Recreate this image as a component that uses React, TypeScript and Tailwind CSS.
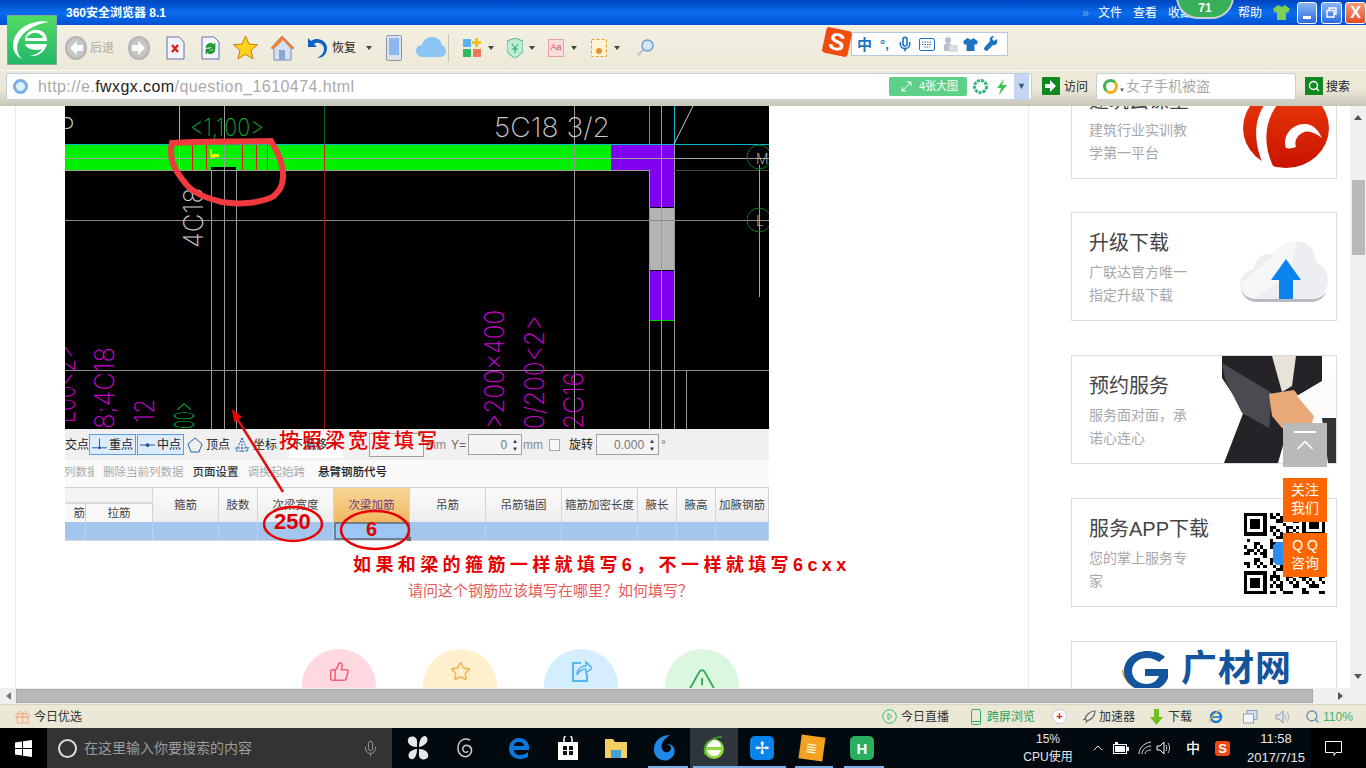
import { ThumbsUp, Star, TriangleAlert, Mic, Search, ChevronUp } from "lucide-react";

const SANS = "font-['Liberation_Sans','Noto_Sans_CJK_SC',sans-serif]";

const HEAD_COLS = [
  { label: "箍筋", w: "w-[66px]" },
  { label: "肢数", w: "w-[39px]" },
  { label: "次梁宽度", w: "w-[76px]" },
  { label: "次梁加筋", w: "w-[76px]", active: true },
  { label: "吊筋", w: "w-[76px]" },
  { label: "吊筋锚固", w: "w-[76px]" },
  { label: "箍筋加密长度", w: "w-[76px]" },
  { label: "腋长", w: "w-[39px]" },
  { label: "腋高", w: "w-[39px]" },
  { label: "加腋钢筋", w: "w-[53px]" },
];

function CadDrawing() {
  const greys = [
    [211, 170, 429], [224, 106, 429], [236, 170, 429], [574, 106, 429], [649, 170, 429], [661, 106, 429], [674, 106, 429], [686, 370, 429],
  ];
  return (
    <svg viewBox="65 106 704 323" className="block h-[323px] w-[704px] bg-black">
      <rect x="65" y="145" width="546" height="25" fill="#00f000" />
      <rect x="211" y="167" width="25" height="3" fill="#000" />
      <rect x="611" y="145" width="63" height="25" fill="#8000f0" />
      <rect x="649" y="145" width="25" height="62" fill="#8000f0" />
      <rect x="649" y="208" width="25" height="62" fill="#b4b4b4" />
      <rect x="649" y="271" width="25" height="49" fill="#8000f0" />
      <line x1="649" y1="320.5" x2="674" y2="320.5" stroke="#00d000" />
      {greys.map(([x, a, b]) => (
        <line key={x} x1={x + 0.5} y1={a} x2={x + 0.5} y2={b} stroke="#9a9a9a" />
      ))}
      <line x1="65" y1="144.5" x2="769" y2="144.5" stroke="#10b8c8" />
      <line x1="649.5" y1="106" x2="649.5" y2="145" stroke="#10b8c8" />
      <line x1="674.5" y1="106" x2="674.5" y2="145" stroke="#10b8c8" />
      <line x1="65" y1="158.5" x2="769" y2="158.5" stroke="#a0a0a0" />
      <line x1="65" y1="170.5" x2="649" y2="170.5" stroke="#a0a0a0" />
      <line x1="674" y1="170.5" x2="769" y2="170.5" stroke="#444" />
      <line x1="65" y1="220.5" x2="769" y2="220.5" stroke="#8a8a8a" />
      <line x1="65" y1="370.5" x2="769" y2="370.5" stroke="#8a8a8a" />
      <line x1="674" y1="144" x2="693" y2="106" stroke="#c8c8c8" />
      <line x1="324.5" y1="170" x2="324.5" y2="429" stroke="#a01010" />
      <line x1="324.5" y1="145" x2="324.5" y2="170" stroke="#d02020" />
      <line x1="324.5" y1="106" x2="324.5" y2="145" stroke="#0a6a20" />
      <line x1="179.5" y1="106" x2="179.5" y2="170" stroke="#c8c800" />
      <line x1="759.5" y1="165" x2="759.5" y2="297" stroke="#b8b800" />
      {[192, 206, 242, 256, 267].map((x) => (
        <line key={x} x1={x + 0.5} y1="145" x2={x + 0.5} y2="170" stroke="#e01818" />
      ))}
      <path d="M211 149v8h4" fill="none" stroke="#f0f000" strokeWidth="1.5" />
      <rect x="212" y="154" width="7" height="3" fill="#f0f000" />
      <circle cx="759" cy="157" r="12" fill="none" stroke="#0a7a20" />
      <circle cx="759" cy="220" r="12" fill="none" stroke="#0a7a20" />
      <g fontFamily="Inter, Liberation Sans, sans-serif" fontWeight="200">
        <text x="756" y="164" fill="#d8d8d8" fontSize="14">M</text>
        <text x="756" y="226" fill="#d8d8d8" fontSize="14">L</text>
        <text x="190" y="136" fill="#10b030" fontSize="24" textLength="74" lengthAdjust="spacingAndGlyphs">{"<1,100>"}</text>
        <text x="494" y="137" fill="#c8c8c8" fontSize="27" textLength="116" lengthAdjust="spacingAndGlyphs">5C18 3/2</text>
        <text x="58" y="137" fill="#c8c8c8" fontSize="27">P</text>
        <text transform="translate(203 248) rotate(-90)" fill="#c8c8c8" fontSize="27" textLength="60" lengthAdjust="spacingAndGlyphs">4C18</text>
        <g fill="#d000d0" fontSize="27">
          <text transform="translate(504 429) rotate(-90)" textLength="119" lengthAdjust="spacingAndGlyphs">{">200×400"}</text>
          <text transform="translate(544 429) rotate(-90)" textLength="114" lengthAdjust="spacingAndGlyphs">{"0/200<2>"}</text>
          <text transform="translate(583 429) rotate(-90)" textLength="57" lengthAdjust="spacingAndGlyphs">2C16</text>
          <text transform="translate(75 423) rotate(-90)" textLength="78" lengthAdjust="spacingAndGlyphs">{"L00<2>"}</text>
          <text transform="translate(114 429) rotate(-90)" textLength="82" lengthAdjust="spacingAndGlyphs">8;4C18</text>
          <text transform="translate(154 423) rotate(-90)" textLength="24" lengthAdjust="spacingAndGlyphs">12</text>
        </g>
        <text transform="translate(194 429) rotate(-90)" fill="#10c030" fontSize="27" textLength="27" lengthAdjust="spacingAndGlyphs">{"00>"}</text>
      </g>
    </svg>
  );
}

function CadToolbar() {
  return (
    <div className="flex h-[31px] items-center whitespace-nowrap bg-[#f0f0f0] text-[12px] text-[#222]">
      <span className="w-[24px]">交点</span>
      <div className="flex h-[21px] w-[47px] items-center gap-[2px] border border-[#5aa0e8] bg-[#dcecfb] pl-[2px]">
        <svg width="15" height="14" viewBox="0 0 16 14"><path d="M0 10h16M8 0v10" stroke="#2050a0" fill="none" /><circle cx="8" cy="10" r="1.5" fill="#2050a0" /></svg>
        <span>重点</span>
      </div>
      <div className="ml-[1px] flex h-[21px] w-[47px] items-center gap-[2px] border border-[#5aa0e8] bg-[#dcecfb] pl-[2px]">
        <svg width="15" height="14" viewBox="0 0 16 14"><path d="M0 7h16" stroke="#2050a0" /><circle cx="8" cy="7" r="2" fill="#2050a0" /></svg>
        <span>中点</span>
      </div>
      <svg className="ml-[3px]" width="16" height="16" viewBox="0 0 16 16"><path d="M8 1l7 6-3 8H4L1 7z" fill="none" stroke="#2060b0" /></svg>
      <span className="ml-[3px] w-[26px]">顶点</span>
      <svg className="ml-[2px]" width="16" height="16" viewBox="0 0 16 16"><path d="M8 1l6 13H2zM8 1v14M1 11h14" fill="none" stroke="#2060b0" strokeDasharray="2 1" /></svg>
      <span className="ml-[3px] w-[26px]">坐标</span>
      <div className="ml-[10px] h-[26px] w-[54px] bg-white pl-[2px] leading-[26px]">不偏移</div>
      <div className="ml-[26px] h-[24px] w-[55px] border border-[#a0a0a0] bg-[#f4f4f4]" />
      <span className="ml-[2px] text-[#888]">mm</span>
      <span className="ml-[5px] text-[#666]">Y=</span>
      <div className="ml-[2px] flex h-[21px] w-[54px] items-center justify-end border border-[#a0a0a0] bg-[#f4f4f4] pr-[3px] text-[#777]">
        <span className="mr-[5px]">0</span>
        <span className="flex flex-col text-[6px] leading-[8px] text-[#333]"><span>▲</span><span>▼</span></span>
      </div>
      <span className="ml-[1px] text-[#888]">mm</span>
      <span className="ml-[6px] h-[12px] w-[11px] border border-[#aaa] bg-[#f8f8f8]" />
      <span className="ml-[9px]">旋转</span>
      <div className="ml-[3px] flex h-[21px] w-[63px] items-center justify-end border border-[#a0a0a0] bg-[#f4f4f4] pr-[3px] text-[#777]">
        <span className="mr-[5px]">0.000</span>
        <span className="flex flex-col text-[6px] leading-[8px] text-[#333]"><span>▲</span><span>▼</span></span>
      </div>
      <span className="ml-[2px] text-[#666]">°</span>
    </div>
  );
}

function CadTable() {
  return (
    <div className="text-[11.5px] text-[#444]">
      <div className="flex h-[27px] items-start gap-[9px] whitespace-nowrap bg-[#fafafa] pt-[4px] text-[#aaa]">
        <span className="ml-[-1px] w-[30px] overflow-hidden">列数据</span>
        <span>删除当前列数据</span>
        <span className="font-medium text-[#333]">页面设置</span>
        <span>调换起始跨</span>
        <span className="ml-[4px] font-medium text-[#222]">悬臂钢筋代号</span>
      </div>
      <div className="flex h-[35px] border-t border-[#d0d0d0]">
        <div className="flex w-[88px] flex-col">
          <div className="h-[17px] border-b-2 border-r border-[#d8d8d8] bg-[#f3f3f3]" />
          <div className="flex flex-1 bg-[#f8f8f8]">
            <span className="w-[21px] overflow-hidden border-r border-[#d0d0d0] text-right leading-[18px]">筋</span>
            <span className="flex-1 border-r border-[#d0d0d0] text-center leading-[18px]">拉筋</span>
          </div>
        </div>
        {HEAD_COLS.map((c) => (
          <div
            key={c.label}
            className={`${c.w} flex justify-center overflow-hidden whitespace-nowrap border-r border-[#d4d4d4] pt-[9px] ${c.active ? "bg-linear-to-b from-[#f8d694] to-[#f0b860] text-[#6a3a80]" : "bg-linear-to-b from-[#fbfbfb] to-[#ededed]"}`}
          >
            {c.label}
          </div>
        ))}
      </div>
      <div className="flex h-[19px] border-b border-[#d8d8d8] bg-[#a3c6ee]">
        <div className="w-[21px] border-r border-[#bcd4f0]" />
        <div className="w-[67px] border-r border-[#bcd4f0]" />
        {HEAD_COLS.map((c) => (
          <div key={c.label} className={`${c.w} ${c.active ? "relative border-2 border-[#6e7e8e] bg-[#9cc6f4]" : "border-r border-[#bcd4f0]"}`}>
            {c.active && <span className="absolute bottom-[-3px] right-[-3px] h-[4px] w-[4px] bg-[#666]" />}
          </div>
        ))}
      </div>
    </div>
  );
}

function Annotations() {
  return (
    <>
      <svg viewBox="65 106 704 445" className="pointer-events-none absolute left-0 top-0 h-[445px] w-[704px]">
        <path
          d="M172 143C200 141 240 142 271 141C278 152 284 165 283 178C282 190 277 192 274 196C262 203 240 205 222 202C205 198 193 193 186 184C176 172 168 160 172 143Z"
          fill="none"
          stroke="#f03a3f"
          strokeWidth="6"
        />
        <line x1="283" y1="492" x2="236" y2="417" stroke="#e01010" strokeWidth="2.5" />
        <path d="M232 409l10 8-8 5z" fill="#f00000" />
        <ellipse cx="293" cy="524" rx="29" ry="17" fill="none" stroke="#e80000" strokeWidth="2.5" />
        <ellipse cx="375" cy="530" rx="34" ry="19" fill="none" stroke="#e80000" strokeWidth="2.5" />
      </svg>
      <span className="absolute left-[214px] top-[322px] whitespace-nowrap text-[20px] font-medium leading-[26px] tracking-[3px] text-[#e80000]">按照梁宽度填写</span>
      <span className="absolute left-[209px] top-[404px] text-[22px] font-bold leading-[24px] text-[#e00000]">250</span>
      <span className="absolute left-[301px] top-[412px] text-[20px] font-bold leading-[22px] text-[#e00000]">6</span>
    </>
  );
}

function Flame() {
  return (
    <svg width="88" height="72" viewBox="0 0 88 72">
      <defs>
        <linearGradient id="fl" x1="0" y1="0" x2="0" y2="1"><stop offset="0" stopColor="#ec3a08" /><stop offset="1" stopColor="#c81400" /></linearGradient>
      </defs>
      <ellipse cx="44" cy="32" rx="43" ry="40" fill="url(#fl)" />
      <path d="M30 0C14 14 8 40 22 70c5 2 8 2 10 2C18 44 24 16 44 0z" fill="#fff" />
      <path d="M44 52C40 40 50 27 64 28c8 1 12 6 16 14-8-6-14-8-20-5-5 3-8 8-6 14-3 1-7 2-10 1z" fill="#fff" />
    </svg>
  );
}

function CloudUp() {
  return (
    <svg width="88" height="62" viewBox="0 0 88 62">
      <path d="M16 58C6 58 0 50 0 43c0-9 8-14 14-15 0-12 12-18 20-14C38 6 46 0 56 0c12 0 20 10 20 21 6 2 12 9 12 19 0 10-8 18-16 18z" fill="#eceef2" />
      <path d="M34 14C38 6 46 0 56 0L52 30 14 58C6 56 2 50 0 43z" fill="#f6f7f9" />
      <path d="M16 58h56c6 0 12-3 15-9-2 7-8 12-15 12H16C9 61 3 56 1 49c3 6 9 9 15 9z" fill="#b8bcc2" />
      <path d="M46 18L61 39H53V58H39V39H31z" fill="#0a84ec" strokeLinejoin="round" />
    </svg>
  );
}

function Handshake() {
  return (
    <svg width="114" height="107" viewBox="0 0 114 107" className="block">
      <path d="M0 0H100V25L75 40 56 107H2L22 55 0 22z" fill="#232328" />
      <path d="M50 0H74L70 30 60 36z" fill="#e8e2d8" />
      <path d="M0 7L50 37 47 72 20 57 3 23z" fill="#4a4a50" />
      <path d="M47 38L72 34 92 60 88 74 60 72 50 60z" fill="#e8a878" />
      <path d="M75 40L114 17V62L92 60z" fill="#fbfbfb" />
      <path d="M100 62L114 62V107H106z" fill="#333338" />
    </svg>
  );
}

function QrCode() {
  const n = 25;
  const cells: [number, number][] = [];
  for (let y = 0; y < n; y++) {
    for (let x = 0; x < n; x++) {
      const inFinder = (x < 8 && y < 8) || (x >= n - 8 && y < 8) || (x < 8 && y >= n - 8);
      if (!inFinder && ((x * 7 + y * 13 + x * y) % 5 < 2 || (x * y) % 7 === 1)) cells.push([x, y]);
    }
  }
  const finder = (x: number, y: number) => (
    <g key={`${x}-${y}`}>
      <rect x={x} y={y} width="7" height="7" fill="#000" />
      <rect x={x + 1} y={y + 1} width="5" height="5" fill="#fff" />
      <rect x={x + 2} y={y + 2} width="3" height="3" fill="#000" />
    </g>
  );
  return (
    <svg width="81" height="81" viewBox="0 0 25 25" shapeRendering="crispEdges" className="block">
      {cells.map(([x, y]) => (
        <rect key={`${x}:${y}`} x={x} y={y} width="1" height="1" fill="#000" />
      ))}
      {finder(0, 0)}
      {finder(18, 0)}
      {finder(0, 18)}
      <rect x="9" y="9" width="7" height="7" rx="1.5" fill="#2b8ef0" />
    </svg>
  );
}

function SideCard({ title, lines, mt, art, artClass }: { title: string; lines: string[]; mt: string; art: React.ReactNode; artClass: string }) {
  return (
    <div className={`${mt} flex h-[109px] w-[266px] shrink-0 justify-between overflow-hidden border border-[#dcdcdc] bg-white`}>
      <div className="w-[126px] shrink-0 pl-[17px] pt-[16px]">
        <div className="whitespace-nowrap text-[20px] leading-[28px] text-[#444]">{title}</div>
        <div className="mt-[4px] text-[14px] leading-[23px] text-[#a8a8a8]">
          {lines.map((l) => (
            <div key={l} className="whitespace-nowrap">{l}</div>
          ))}
        </div>
      </div>
      <div className={artClass}>{art}</div>
    </div>
  );
}

function Sidebar() {
  return (
    <div className="ml-[42px] flex h-full w-[266px] flex-col overflow-hidden">
      <SideCard
        mt="mt-[-36px]"
        title="建筑云课堂"
        lines={["建筑行业实训教", "学第一平台"]}
        art={<Flame />}
        artClass="mr-[6px] mt-[25px]"
      />
      <SideCard
        mt="mt-[33px]"
        title="升级下载"
        lines={["广联达官方唯一", "指定升级下载"]}
        art={<CloudUp />}
        artClass="mr-[8px] mt-[28px]"
      />
      <SideCard
        mt="mt-[34px]"
        title="预约服务"
        lines={["服务面对面，承", "诺心连心"]}
        art={<Handshake />}
        artClass="mt-[0px]"
      />
      <SideCard
        mt="mt-[34px]"
        title="服务APP下载"
        lines={["您的掌上服务专", "家"]}
        art={<QrCode />}
        artClass="mr-[11px] mt-[14px]"
      />
      <div className="mt-[34px] flex h-[60px] w-[266px] shrink-0 items-start gap-[8px] border border-[#dcdcdc] bg-white pl-[49px] pt-[7px]">
        <svg width="52" height="46" viewBox="0 0 52 46">
          <path d="M2 20C4 30 10 38 22 42 12 40 2 32 1 22z" fill="#ec9a20" />
          <path d="M44 8C40 4 33 2 26 2 13 2 3 11 3 22s10 20 23 20c10 0 18-5 21-13V20H24v7h14c-2 5-7 8-12 8-9 0-15-6-15-13S17 9 26 9c5 0 9 2 12 4z" fill="#14549c" />
        </svg>
        <span className="text-[36px] font-bold leading-[40px] tracking-[1px] text-[#14549c]">广材网</span>
      </div>
    </div>
  );
}

function ActionCircle({ bg, pad, children }: { bg: string; pad: string; children: React.ReactNode }) {
  return (
    <div className={`flex h-[74px] w-[74px] justify-center rounded-full ${pad} ${bg}`}>{children}</div>
  );
}

function TitleBar() {
  return (
    <div className="flex h-[25px] items-center whitespace-nowrap bg-linear-to-b from-[#0044c0] via-[#0a6cec] to-[#0052d4] text-[12px] text-white">
      <span className="ml-[66px] font-bold">360安全浏览器 8.1</span>
      <span className="ml-auto text-[#7aa8e8]">»</span>
      <div className="ml-[9px] flex gap-[11px]">
        <span>文件</span>
        <span>查看</span>
        <span className="w-[50px]">收藏 工具</span>
      </div>
      <span className="ml-[20px]">帮助</span>
      <svg className="ml-[11px]" width="17" height="15" viewBox="0 0 17 15"><path d="M5 0L0 4l2 4 2-1v8h9V7l2 1 2-4-5-4-3 2z" fill="#7fd050" /></svg>
      <div className="ml-[7px] flex h-[22px] w-[20px] items-end justify-center rounded-[3px] border border-white bg-linear-to-b from-[#8ab4f0] to-[#2a6ae0] pb-[4px]">
        <span className="h-[3px] w-[8px] bg-white" />
      </div>
      <div className="ml-[4px] flex h-[22px] w-[21px] items-center justify-center rounded-[3px] border border-white bg-linear-to-b from-[#8ab4f0] to-[#2a6ae0]">
        <svg width="11" height="11" viewBox="0 0 11 11"><path d="M3 3V1h7v6H8M1 3.500h7v6.500H1z" fill="none" stroke="#fff" strokeWidth="1.4" /></svg>
      </div>
      <div className="ml-[3px] flex h-[22px] w-[21px] items-center justify-center rounded-[3px] border border-white bg-linear-to-b from-[#f4a080] to-[#e04818] text-[16px] font-bold leading-none">X</div>
    </div>
  );
}

function Caret() {
  return <span className="h-0 w-0 border-x-[3px] border-t-[4px] border-x-transparent border-t-[#444]" />;
}

function NavArrow({ flip }: { flip?: boolean }) {
  return (
    <svg width="22" height="24" viewBox="0 0 22 24" className={flip ? "-scale-x-100" : ""}>
      <ellipse cx="11" cy="12" rx="11" ry="12" fill="#b4b4b4" />
      <ellipse cx="11" cy="12" rx="9" ry="10" fill="#c6c6c6" />
      <path d="M12 5l-7 7 7 7v-4h6V9h-6z" fill="#fff" />
    </svg>
  );
}

function MainToolbar() {
  return (
    <div className="flex h-[45px] items-center whitespace-nowrap bg-linear-to-b from-[#f3f0e2] to-[#ece9d9] pl-[65px] text-[12px] text-[#333]">
      <NavArrow />
      <span className="ml-[3px] text-[#aaa]">后退</span>
      <span className="ml-[14px] flex"><NavArrow flip /></span>
      <svg className="ml-[16px]" width="19" height="24" viewBox="0 0 19 24"><path d="M1 1h12l5 5v17H1z" fill="#f4f6ff" stroke="#6070b0" /><path d="M6 9l6 7M12 9l-6 7" stroke="#e02010" strokeWidth="2.4" /></svg>
      <svg className="ml-[16px]" width="19" height="24" viewBox="0 0 19 24"><path d="M1 1h12l5 5v17H1z" fill="#f4f6ff" stroke="#6070b0" /><path d="M5 12a4.500 4.500 0 018-3l1-2v6h-5l2-2M14 13a4.500 4.500 0 01-8 3l-1 2v-5h5l-2 2" fill="#20a030" stroke="#108020" strokeWidth=".6" /></svg>
      <svg className="ml-[13px]" width="25" height="25" viewBox="0 0 25 25"><path d="M12.500 1l3.500 8 8.500.8-6.500 5.600 2 8.400-7.500-4.500L5 23.800l2-8.400L.5 9.800 9 9z" fill="#ffd21e" stroke="#c08010" /></svg>
      <svg className="ml-[12px]" width="25" height="26" viewBox="0 0 25 26"><path d="M12 1L1 13l3 1v11h17V14l3-1z" fill="#cfe2f6" stroke="#7a8cb0" /><path d="M12 1L1 13l3 1L13 5l8 9 3-1z" fill="#f08030" /><rect x="9" y="15" width="6" height="10" fill="#90a8c8" /></svg>
      <svg className="ml-[11px]" width="22" height="24" viewBox="0 0 22 24"><path d="M2 2v9h9L8 8c4-3 10 0 10 5 0 4-3 7-7 9 6 0 10-4 10-10C21 5 12 0 5 5z" fill="#1060c8" /></svg>
      <span className="ml-[4px] text-[#222]">恢复</span>
      <span className="ml-[10px] flex"><Caret /></span>
      <svg className="ml-[14px]" width="16" height="26" viewBox="0 0 16 26"><rect x=".5" y=".5" width="15" height="25" rx="2" fill="#dde2ea" stroke="#8a94a4" /><rect x="3" y="3" width="10" height="17" fill="#8cb8ee" /></svg>
      <svg className="ml-[14px]" width="30" height="21" viewBox="0 0 30 21"><path d="M7 20C3 20 0 17 0 14c0-4 3-6 6-6 1-5 5-8 10-8 6 0 9 4 10 8 2 1 4 3 4 6 0 4-3 6-6 6z" fill="#8cc4f4" /></svg>
      <span className="ml-[2px] h-[28px] w-px bg-[#c8c4b0]" />
      <svg className="ml-[14px]" width="19" height="20" viewBox="0 0 19 20"><rect y="1" width="8" height="8" fill="#58b0f0" /><rect y="11" width="8" height="8" fill="#30b860" /><rect x="10" y="11" width="8" height="8" fill="#f07858" /><path d="M12 0h3v3h3v3h-3v3h-3V6H9V3h3z" fill="#f0c020" /></svg>
      <span className="ml-[6px] flex"><Caret /></span>
      <svg className="ml-[13px]" width="16" height="20" viewBox="0 0 16 20"><path d="M8 0l8 3v8c0 4-4 7-8 9-4-2-8-5-8-9V3z" fill="#bdeed4" stroke="#50b088" /><path d="M5 6l3 4 3-4M8 10v5M5 11h6" stroke="#20a070" fill="none" /></svg>
      <span className="ml-[6px] flex"><Caret /></span>
      <span className="ml-[13px] flex h-[18px] w-[16px] items-center justify-center border border-[#e8a0a0] bg-[#fbdcdc] text-[9px] leading-none text-[#d05050]">Aa</span>
      <span className="ml-[7px] flex"><Caret /></span>
      <svg className="ml-[14px]" width="16" height="18" viewBox="0 0 16 18"><rect x=".5" y=".5" width="15" height="17" fill="#fdf4d4" stroke="#e0a030" strokeDasharray="3 2" /><circle cx="8" cy="12" r="3" fill="#e89030" /></svg>
      <span className="ml-[7px] flex"><Caret /></span>
      <svg className="ml-[17px]" width="17" height="17" viewBox="0 0 17 17"><circle cx="10.500" cy="6.500" r="5.500" fill="#d4e6f6" stroke="#6a9ccc" strokeWidth="1.400" /><path d="M6.500 10.500L1 16" stroke="#b8c4d0" strokeWidth="2.400" /></svg>
    </div>
  );
}

function AddressBar() {
  return (
    <div className="flex h-[36px] items-start whitespace-nowrap border-t border-[#fbfaf4] bg-linear-to-b from-[#ece9d9] via-[#ece9d9] to-[#c8c6b8] pl-[6px] pt-[2px]">
      <div className="flex h-[27px] w-[1026px] items-center rounded-[3px] border border-[#c0cfe0] bg-white">
        <span className="ml-[6px] h-[15px] w-[15px] rounded-full border-[3px] border-[#7ab0e8] bg-[#dff0ff]" />
        <span className="ml-[10px] w-[851px] text-[16px] tracking-[0.42px] text-[#aaa]">
          http://e.<span className="text-[#222]">fwxgx.com</span>/question_1610474.html
        </span>
        <div className="flex h-[19px] w-[78px] items-center rounded-[2px] bg-[#5fd088] pl-[12px] text-[11px] text-white">
          <svg width="11" height="11" viewBox="0 0 11 11"><path d="M1 10l9-9M6 1h4v4M1 6v4h4" stroke="#fff" fill="none" /></svg>
          <span className="ml-[7px]">4张大图</span>
        </div>
        <svg className="ml-[6px]" width="15" height="15" viewBox="0 0 15 15"><circle cx="7.500" cy="7.500" r="6" fill="none" stroke="#30b878" strokeWidth="3" strokeDasharray="3 1" /></svg>
        <svg className="ml-[8px]" width="11" height="16" viewBox="0 0 11 16"><path d="M8 0L1 9h4l-2 7 8-10H6z" fill="#38c850" /></svg>
        <span className="ml-[7px] flex h-[25px] w-[15px] items-center justify-center bg-[#c4d6f4] text-[9px] text-[#405080]">▼</span>
      </div>
      <svg className="ml-[10px] mt-[4px]" width="18" height="18" viewBox="0 0 18 18"><rect width="18" height="18" rx="1" fill="#108820" /><path d="M8 3l6 6-6 6v-4H3V7h5z" fill="#fff" /></svg>
      <span className="ml-[4px] mt-[5px] text-[12px] text-[#222]">访问</span>
      <div className="ml-[8px] flex h-[27px] w-[200px] items-center rounded-[3px] border border-[#c0cfe0] bg-white">
        <span className="ml-[6px] h-[15px] w-[15px] rounded-full border-[3px] border-b-[#f0b020] border-l-[#40b050] border-r-[#f0b020] border-t-[#40b050]" />
        <span className="ml-[1px] mt-[8px] text-[6px] text-[#555]">▼</span>
        <span className="ml-[1px] text-[14px] text-[#aaa]">女子手机被盗</span>
      </div>
      <span className="ml-[9px] mt-[4px] flex h-[18px] w-[18px] items-center justify-center bg-[#108820]">
        <Search size={12} strokeWidth={3} className="text-white" />
      </span>
      <span className="ml-[3px] mt-[5px] text-[12px] text-[#222]">搜索</span>
    </div>
  );
}

function StatusBar() {
  return (
    <div className="flex h-[24px] items-center whitespace-nowrap border-t border-[#d8d4c0] bg-[#ebe8d7] text-[12px] text-[#333]">
      <svg className="ml-[15px]" width="15" height="15" viewBox="0 0 15 15"><path d="M1 5h13v3H1zM2 8h11v6H2zM7.500 5v9M7.500 5C5 1 2 2 4 5M7.500 5c2-4 5-3 3 0" fill="none" stroke="#f0a888" /></svg>
      <span className="ml-[4px]">今日优选</span>
      <svg className="ml-[800px]" width="15" height="15" viewBox="0 0 15 15"><circle cx="7.500" cy="7.500" r="6.800" fill="none" stroke="#30c070" /><path d="M6 4.500l4 3-4 3z" fill="none" stroke="#30c070" /></svg>
      <span className="ml-[4px]">今日直播</span>
      <svg className="ml-[22px]" width="10" height="16" viewBox="0 0 10 16"><rect x=".5" y=".5" width="9" height="15" rx="1" fill="none" stroke="#30b060" /><path d="M1 12.500h8" stroke="#30b060" /></svg>
      <span className="ml-[6px] text-[#30a050]">跨屏浏览</span>
      <span className="ml-[17px] flex h-[15px] w-[15px] items-center justify-center rounded-full border border-[#c0c8d8] bg-white text-[11px] font-bold leading-none text-[#d02030]">+</span>
      <svg className="ml-[15px]" width="14" height="14" viewBox="0 0 14 14"><path d="M13 1C8 1 4 5 3 9l2 2c4-1 8-5 8-10zM3 9l-2 1M5 11l-1 2" fill="none" stroke="#666" strokeWidth="1.200" /></svg>
      <span className="ml-[3px]">加速器</span>
      <svg className="ml-[15px]" width="13" height="16" viewBox="0 0 13 16"><path d="M4 0h5v8h4l-6.500 8L0 8h4z" fill="#70c020" /></svg>
      <span className="ml-[5px]">下载</span>
      <svg className="ml-[16px]" width="16" height="16" viewBox="0 0 16 16"><circle cx="8" cy="8" r="5" fill="none" stroke="#1878d8" strokeWidth="2.400" /><path d="M4 8h9" stroke="#1878d8" strokeWidth="1.600" /><path d="M2 14C0 10 8 2 14 1" fill="none" stroke="#f0b020" strokeWidth="1.200" /></svg>
      <svg className="ml-[19px]" width="15" height="14" viewBox="0 0 15 14"><rect x="4" y=".5" width="10" height="9" fill="#d4e0f0" stroke="#8aa0c0" /><rect x=".5" y="4" width="10" height="9" fill="#f2f6fb" stroke="#8aa0c0" /></svg>
      <svg className="ml-[17px]" width="15" height="14" viewBox="0 0 15 14"><path d="M1 5h3l4-4v12L4 9H1z" fill="#e0e4ea" stroke="#9098a8" /><path d="M10 4c1 2 1 4 0 6M12 2c2 3 2 7 0 10" fill="none" stroke="#a8b0c0" /></svg>
      <Search className="ml-[15px] text-[#5a88b8]" size={15} strokeWidth={2} />
      <span className="ml-[3px] text-[#40b070]">110%</span>
    </div>
  );
}

function Taskbar() {
  return (
    <div className="flex h-[40px] items-stretch bg-[#02090f] text-white">
      <div className="flex w-[47px] items-center justify-center bg-black">
        <svg width="17" height="17" viewBox="0 0 17 17"><path d="M0 2.500l7-1v6.500H0zM8 1.300L17 0v8H8zM0 9h7v6.500l-7-1zM8 9h9v8l-9-1.300z" fill="#fff" /></svg>
      </div>
      <div className="flex w-[345px] items-center bg-[#333333]">
        <span className="ml-[11px] h-[19px] w-[19px] rounded-full border-2 border-[#dcdcdc]" />
        <span className="ml-[7px] text-[14px] text-[#9c9c9c]">在这里输入你要搜索的内容</span>
        <Mic className="ml-auto mr-[13px] text-[#999]" size={17} strokeWidth={1.4} />
      </div>
      <div className="flex items-center">
        <svg className="ml-[15px]" width="22" height="24" viewBox="0 0 22 24"><path d="M10 11C3 11 0 7 1 3c2-4 9-3 9 2zM12 11c0-6 2-11 6-11 4 1 4 9-6 11zM10 13c0 6-2 11-6 10-4-1-4-9 6-10zM12 13c7 0 10 4 9 8-2 4-9 3-9-2z" fill="#e8e8e8" /></svg>
        <svg className="ml-[27px]" width="18" height="22" viewBox="0 0 18 22"><path d="M14 3C8 0 2 4 2 11s6 10 10 8 5-8 1-10-7 1-6 4 4 3 5 1" fill="none" stroke="#cfcfcf" strokeWidth="1.500" /></svg>
        <svg className="ml-[34px]" width="22" height="24" viewBox="0 0 22 24"><path d="M11 2C4 2 1 8 1 13c0 6 5 10 11 10 3 0 6-1 8-2v-5c-2 2-5 3-8 3-3 0-6-2-6-5h15c1-7-3-12-10-12zM6 10c0-3 2-4 5-4s5 2 5 4z" fill="#0a78d8" /></svg>
        <svg className="ml-[27px]" width="22" height="24" viewBox="0 0 22 24"><path d="M1 6h20v18H1z" fill="#fff" /><path d="M7 6V3a4 4 0 018 0v3" fill="none" stroke="#fff" strokeWidth="1.500" /><path d="M6 10h4v4H6zM12 10h4v4h-4zM6 15h4v4H6zM12 15h4v4h-4z" fill="#111" /></svg>
        <svg className="ml-[26px]" width="22" height="20" viewBox="0 0 22 20"><path d="M0 1h8l2 3h12v16H0z" fill="#f4d060" /><path d="M6 12h10v8H6z" fill="#40a0d8" /></svg>
        <svg className="ml-[25px]" width="24" height="28" viewBox="0 0 24 28"><path d="M18 1C8 1 1 8 2 17c1 7 8 11 14 9 5-2 8-7 6-12-1-3-5-5-8-3 3-1 5 1 5 3 0 3-3 5-6 4s-4-5-3-8c1-4 5-7 8-9z" fill="#2088e8" /></svg>
        <div className="relative ml-[14px] flex h-full w-[48px] items-center justify-center bg-[#2e363c]">
          <svg width="24" height="26" viewBox="0 0 24 26"><circle cx="12" cy="14" r="10" fill="#90d840" /><path d="M5 12h14a7 7 0 00-14 0zM5 15h14c-1 4-4 6-7 6-4 0-6-3-7-6z" fill="#fff" /><path d="M3 20C0 10 10 2 20 2" fill="none" stroke="#40a030" strokeWidth="1.500" /></svg>
        </div>
        <span className="ml-[12px] flex h-[24px] w-[24px] items-center justify-center rounded-[5px] bg-[#0a84e8] text-[17px] leading-none text-white">✢</span>
        <span className="ml-[26px] flex h-[24px] w-[24px] rotate-[8deg] items-center justify-center bg-[#f4a020] text-[14px] leading-none text-[#fff4d0]">≣</span>
        <span className="ml-[26px] flex h-[24px] w-[24px] items-center justify-center rounded-[5px] bg-[#28b060] text-[15px] font-bold leading-none text-white">H</span>
      </div>
      <div className="ml-[144px] flex w-[60px] flex-col items-center justify-center text-[12px] leading-[18px] text-[#e8e8e8]">
        <span>15%</span>
        <span className="whitespace-nowrap">CPU使用</span>
      </div>
      <div className="flex items-center">
        <ChevronUp className="ml-[12px]" size={16} strokeWidth={1.4} />
        <svg className="ml-[7px]" width="16" height="12" viewBox="0 0 16 12"><rect x=".5" y="2.500" width="13" height="9" fill="none" stroke="#fff" /><rect x="2" y="4" width="10" height="6" fill="#fff" /><path d="M14 5h2v4h-2zM2 0h3v2H2z" fill="#fff" /></svg>
        <svg className="ml-[9px]" width="14" height="14" viewBox="0 0 14 14"><path d="M1 13C1 7 6 2 13 1M4 13c0-4 4-8 9-8M7 13c0-2 2-4 6-4" fill="none" stroke="#ddd" /></svg>
        <svg className="ml-[4px]" width="15" height="14" viewBox="0 0 15 14"><path d="M1 5h3l4-4v12L4 9H1z" fill="none" stroke="#fff" /><path d="M10 4c1 2 1 4 0 6M12 2c2 3 2 7 0 10" fill="none" stroke="#ccc" /></svg>
        <span className="ml-[15px] text-[14px] font-medium">中</span>
        <span className="ml-[15px] flex h-[15px] w-[15px] items-center justify-center rounded-[3px] bg-[#f04810] text-[13px] font-bold leading-none text-white">S</span>
      </div>
      <div className="ml-[15px] flex w-[62px] flex-col items-center justify-center whitespace-nowrap text-[13px] leading-[19px] text-[#e8e8e8]">
        <span>11:58</span>
        <span>2017/7/15</span>
      </div>
      <div className="ml-[4px] flex flex-1 items-center justify-center bg-black pr-[10px]">
        <svg width="17" height="17" viewBox="0 0 17 17"><path d="M.5 1.500h16v11H11l-2 3v-3H.5z" fill="none" stroke="#fff" /></svg>
      </div>
    </div>
  );
}

export default function App() {
  return (
    <div className={`relative flex h-[768px] w-[1366px] flex-col overflow-hidden bg-white ${SANS}`}>
      <TitleBar />
      <MainToolbar />
      <AddressBar />

      <div className="flex h-[582px] bg-white">
        <div className="flex w-[1350px]">
          <div className="ml-[15px] w-[1014px] shrink-0 overflow-hidden border-x border-[#e8e8e8] pl-[49px]">
            <div className="relative w-[704px]">
              <CadDrawing />
              <CadToolbar />
              <CadTable />
              <Annotations />
            </div>
            <div className="ml-[288px] mt-[13px] whitespace-nowrap text-[18px] font-bold leading-[22px] tracking-[4.4px] text-[#e80000]">如果和梁的箍筋一样就填写6，不一样就填写6cxx</div>
            <div className="ml-[343px] mt-[5px] whitespace-nowrap text-[15px] leading-[20px] text-[#e85a5a]">请问这个钢筋应该填写在哪里？如何填写？</div>
            <div className="ml-[237px] mt-[48px] flex gap-[47px]">
              <ActionCircle bg="bg-[#ffd9df]" pad="pt-[12px]"><ThumbsUp size={21} strokeWidth={1.8} className="text-[#f0607a]" /></ActionCircle>
              <ActionCircle bg="bg-[#ffefcc]" pad="pt-[12px]"><Star size={21} strokeWidth={1.8} className="text-[#f4b450]" /></ActionCircle>
              <ActionCircle bg="bg-[#d4eeff]" pad="pt-[11px]">
                <svg width="21" height="22" viewBox="0 0 21 22"><path d="M10 3H2v18h14v-7" fill="none" stroke="#58b4ee" strokeWidth="2" /><path d="M6 15c0-6 4-9 9-9V2l6 6-6 5V9c-4 0-7 2-9 6z" fill="none" stroke="#58b4ee" strokeWidth="1.600" /></svg>
              </ActionCircle>
              <ActionCircle bg="bg-[#dcf7e0]" pad="pt-[17px]"><TriangleAlert size={34} strokeWidth={1.3} className="text-[#30a858]" /></ActionCircle>
            </div>
          </div>
          <Sidebar />
        </div>
        <div className="flex w-[16px] flex-col items-center bg-[#f0f0f0] text-[#555]">
          <span className="mt-[9px] h-0 w-0 border-x-[4px] border-b-[5px] border-x-transparent border-b-[#555]" />
          <span className="mt-[60px] h-[75px] w-[13px] bg-[#b9b9b9]" />
          <span className="mt-auto mb-[9px] h-0 w-0 border-x-[4px] border-t-[5px] border-x-transparent border-t-[#555]" />
        </div>
      </div>

      <div className="flex h-[16px] items-center bg-[#f0f0f0]">
        <span className="ml-[6px] h-0 w-0 border-y-[4px] border-r-[5px] border-y-transparent border-r-[#777]" />
        <span className="ml-[5px] h-[14px] w-[1297px] border border-[#a8a8a8] bg-[#b9b9b9]" />
        <span className="ml-[25px] h-0 w-0 border-y-[4px] border-l-[5px] border-y-transparent border-l-[#555]" />
      </div>

      <StatusBar />
      <Taskbar />

      {/* 窗口上方覆盖的元素 */}
      <div className="absolute left-[7px] top-[15px] flex h-[50px] w-[50px] items-center justify-center border border-[#80a8a0] bg-linear-to-b from-[#50dc60] to-[#20b868]">
        <svg width="42" height="42" viewBox="0 0 42 42">
          <path d="M38 3C26 0 8 6 3 20c-3 9 1 17 8 20-4-4-6-10-4-16C10 13 24 5 38 3z" fill="#fff" />
          <path d="M14 20c1-6 6-10 13-9 6 1 9 5 9 11H14zM14 25h22c-2 8-9 13-17 12 5-1 9-3 12-7-6 2-15 1-17-5z" fill="#fff" />
          <path d="M15 19c2-3 5-5 9-5s7 2 8 5z" fill="#34c864" />
        </svg>
      </div>
      <div className="absolute left-[1176px] top-[-26px] flex h-[45px] w-[58px] items-end justify-center rounded-full border-2 border-[#c8d0d0] bg-[#38b058] pb-[3px] text-[12px] font-bold leading-none text-white">71</div>
      <div className="absolute left-[851px] top-[32px] flex h-[24px] w-[157px] items-center border border-[#b8c8dc] bg-white pl-[5px] text-[#1c74c4]">
        <span className="text-[15px] font-bold leading-none">中</span>
        <span className="ml-[8px] text-[13px] font-bold leading-none">°,</span>
        <Mic className="ml-[8px]" size={16} strokeWidth={2.4} />
        <svg className="ml-[6px]" width="16" height="13" viewBox="0 0 16 13"><rect x=".5" y=".5" width="15" height="12" rx="1.500" fill="none" stroke="#1c74c4" /><path d="M3 4h10M3 6.500h10M5 9h6" stroke="#1c74c4" strokeDasharray="1.500 1" /></svg>
        <svg className="ml-[7px]" width="16" height="16" viewBox="0 0 16 16"><circle cx="6" cy="4" r="3" fill="#b8c0cc" /><path d="M2 15V10c0-2 2-3 4-3s4 1 4 3v5z" fill="#b8c0cc" /><rect x="7" y="9" width="9" height="7" fill="#d8dce4" /></svg>
        <svg className="ml-[5px]" width="15" height="15" viewBox="0 0 17 15"><path d="M5 0L0 4l2 4 2-1v8h9V7l2 1 2-4-5-4-3 2z" fill="#1c74c4" /></svg>
        <svg className="ml-[6px]" width="14" height="16" viewBox="0 0 14 16"><path d="M13 3l-3 2-2-2 2-3c-3 0-5 2-4 5L0 12c0 2 1 3 3 3l6-6c3 1 5-2 4-6z" fill="#1c74c4" /></svg>
      </div>
      <div className="absolute left-[824px] top-[29px] flex h-[26px] w-[26px] rotate-[12deg] items-center justify-center rounded-[3px] bg-[#f04c10] text-[24px] font-bold leading-none text-white">S</div>

      <div className="absolute left-[1283px] top-[423px] flex h-[44px] w-[44px] flex-col items-center justify-center bg-[#b9b9b9]">
        <span className="h-[2px] w-[22px] bg-white" />
        <ChevronUp className="mt-[-2px] text-white" size={28} strokeWidth={1.5} />
      </div>
      <div className="absolute left-[1283px] top-[478px] flex h-[44px] w-[44px] items-center justify-center bg-[#ff6600] pb-[3px] text-center text-[14px] leading-[18px] text-white">关注<br />我们</div>
      <div className="absolute left-[1283px] top-[533px] flex h-[44px] w-[44px] items-center justify-center bg-[#ff6600] pb-[3px] text-center text-[14px] leading-[18px] text-white">Q Q<br />咨询</div>

      <div className="absolute bottom-0 left-[648px] h-[2px] w-[40px] bg-[#78b0e8]" />
      <div className="absolute bottom-0 left-[693px] h-[2px] w-[93px] bg-[#78b0e8]" />
      <div className="absolute bottom-0 left-[795px] h-[2px] w-[38px] bg-[#78b0e8]" />
      <div className="absolute bottom-0 left-[844px] h-[2px] w-[40px] bg-[#78b0e8]" />
    </div>
  );
}
